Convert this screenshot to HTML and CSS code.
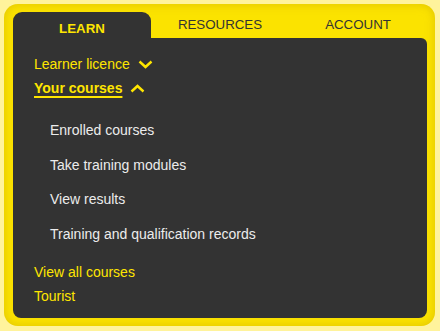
FILE: index.html
```html
<!DOCTYPE html>
<html lang="en">
<head>
    <meta charset="UTF-8">
    <meta name="viewport" content="width=device-width, initial-scale=1.0">
    <title>Menu</title>
    <link rel="stylesheet" href="styles.css">
</head>
<body>
    <div class="nav">
        <div class="tabs">
            <a class="tab active" href="#">LEARN</a>
            <a class="tab" href="#">RESOURCES</a>
            <a class="tab" href="#">ACCOUNT</a>
        </div>
        <div class="panel">
            <a class="menu-link" href="#">Learner licence
                <svg class="chevron" width="15" height="9" viewBox="0 0 15 9"><polyline points="1.5,1.5 7.5,7 13.5,1.5" /></svg>
            </a>
            <a class="menu-link open" href="#"><span>Your courses</span>
                <svg class="chevron" width="15" height="9" viewBox="0 0 15 9"><polyline points="1.5,7.5 7.5,2 13.5,7.5" /></svg>
            </a>
            <ul class="sub-menu">
                <li><a href="#">Enrolled courses</a></li>
                <li><a href="#">Take training modules</a></li>
                <li><a href="#">View results</a></li>
                <li><a href="#">Training and qualification records</a></li>
            </ul>
            <a class="menu-link" href="#">View all courses</a>
            <a class="menu-link" href="#">Tourist</a>
        </div>
    </div>
</body>
</html>
```
FILE: styles.css
```css
/* Global styles */
body {
    font-family: 'Liberation Sans', Arial, sans-serif;
    font-size: 14px;
    margin: 0;
    padding: 4px 5px 5px 4px;
    background: #fff39c;
}

a {
    text-decoration: none;
}

/* Yellow frame */
.nav {
    height: 322px;
    box-sizing: border-box;
    padding: 8px 8px 8px 9px;
    border-radius: 14px;
    background: #fbe300;
    box-shadow: inset 0 0 10px rgba(200, 170, 0, 0.55);
}

/* Tabs */
.tabs {
    display: grid;
    grid-template-columns: repeat(3, 1fr);
    height: 26px;
}

.tab {
    display: flex;
    align-items: center;
    justify-content: center;
    padding-bottom: 2px;
    font-size: 13.3px;
    color: #333;
    border-radius: 9px 9px 0 0;
}

.tab.active {
    padding: 7px 0 0;
    background: #333;
    color: #ffe600;
    font-weight: bold;
}

/* Dark panel */
.panel {
    height: 280px;
    box-sizing: border-box;
    padding: 14px 21px;
    background: #333;
    border-radius: 0 6px 8px 8px;
}

.menu-link {
    display: flex;
    align-items: center;
    height: 24px;
    color: #ffe600;
}

.menu-link.open span {
    font-weight: bold;
    text-decoration: underline;
    text-decoration-thickness: 2px;
    text-underline-offset: 3px;
}

.chevron {
    margin-left: 8px;
    fill: none;
    stroke: #ffe600;
    stroke-width: 2.4;
}

/* Sub menu */
.sub-menu {
    list-style: none;
    margin: 13px 0 9px;
    padding: 0 0 0 16px;
}

.sub-menu li {
    height: 34.5px;
    display: flex;
    align-items: center;
}

.sub-menu a {
    color: #ececec;
}
```
